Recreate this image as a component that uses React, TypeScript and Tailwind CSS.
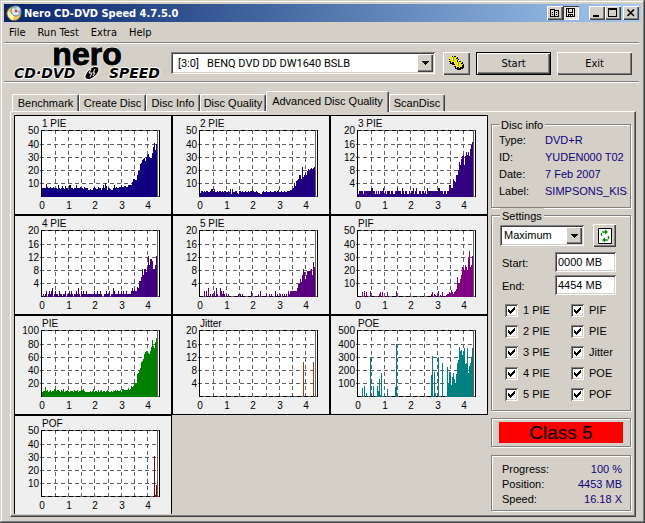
import type { ReactNode } from "react";

const raised =
  "bg-[#d4d0c8] shadow-[inset_1px_1px_#fff,inset_-1px_-1px_#404040,inset_-2px_-2px_#808080]";
const sunken =
  "bg-white shadow-[inset_1px_1px_#808080,inset_-1px_-1px_#fff,inset_2px_2px_#404040,inset_-2px_-2px_#d4d0c8]";
const etched =
  "border border-[#808080] shadow-[1px_1px_#fff,inset_1px_1px_#fff]";

// Column heights of each graph, one per pixel column, on a plot 66 units high.
const list = (s: string) => s.split(" ").map(Number);
const sparse = (points: Record<number, number>, tailStart = 116, tail = "") => {
  const out: number[] = new Array(116).fill(0);
  Object.entries(points).forEach(([k, v]) => (out[Number(k)] = v));
  if (tail) list(tail).forEach((v, i) => (out[tailStart + i] = v));
  return out.slice(0, 116);
};

type Chart = { title: string; color: string; labels: string[]; data: number[]; last?: boolean };

const L50 = ["10", "20", "30", "40", "50"];
const L20 = ["4", "8", "12", "16", "20"];
const L100 = ["20", "40", "60", "80", "100"];
const L500 = ["100", "200", "300", "400", "500"];

const charts: Chart[] = [
  {
    title: "1 PIE",
    color: "#100080",
    labels: L50,
    data: list(
      "9 9 9 9 13 10 9 9 10 9 9 10 9 9 9 8 12 9 8 9 11 9 8 11 9 9 7 12 12 9 9 8 9 9 12 9 9 9 10 9 9 8 10 9 9 9 7 7 8 7 7 9 10 9 8 8 10 9 9 7 9 12 9 14 11 7 9 9 8 7 7 9 12 9 10 9 9 10 10 12 10 10 11 11 10 10 12 12 12 12 15 18 18 17 17 22 26 26 33 34 37 38 39 36 40 42 43 40 39 39 44 50 54 47 53 50",
    ),
  },
  {
    title: "2 PIE",
    color: "#200080",
    labels: L50,
    data: list(
      "4 6 6 5 6 5 6 6 5 5 6 8 8 6 8 5 5 6 5 6 6 5 6 5 6 6 5 5 6 5 8 3 8 5 5 6 6 4 3 6 6 5 6 5 5 6 5 5 6 5 6 6 7 6 5 5 6 5 4 4 3 3 5 6 5 5 6 5 5 5 6 5 5 5 6 6 5 6 7 5 5 6 5 5 6 5 5 6 6 6 7 7 8 9 14 11 16 17 18 22 22 18 30 20 22 24 22 26 28 27 28 29 28 29 30 29",
    ),
  },
  {
    title: "3 PIE",
    color: "#300080",
    labels: L20,
    data: list(
      "3 6 6 6 6 3 6 6 6 6 6 6 6 9 9 6 6 3 6 3 6 3 6 6 6 9 3 6 3 6 6 6 3 6 6 3 3 6 6 9 6 6 6 3 9 6 3 6 6 3 3 6 3 6 6 9 3 6 9 3 3 6 6 3 6 6 3 6 3 9 6 6 6 6 6 6 6 6 6 6 9 9 6 6 6 3 6 6 3 6 6 12 12 9 9 18 16 15 22 22 27 35 32 38 41 42 32 41 45 42 45 41 48 52 55 61",
    ),
  },
  {
    title: "4 PIE",
    color: "#400080",
    labels: L20,
    data: list(
      "0 3 0 3 6 0 3 6 3 6 9 0 3 6 3 3 0 6 3 3 0 3 3 6 0 3 3 6 3 6 3 0 3 3 6 3 9 3 0 6 3 6 3 3 6 3 3 3 3 3 3 3 6 3 3 6 3 3 6 3 0 0 3 3 6 3 3 6 0 3 3 9 6 3 3 3 6 3 3 6 3 6 3 3 6 3 3 3 3 6 9 6 8 6 6 10 9 16 16 20 28 22 28 28 25 30 41 32 38 38 36 28 28 32 41 35",
    ),
  },
  {
    title: "5 PIE",
    color: "#580080",
    labels: L20,
    data: sparse(
      { 4: 6, 6: 6, 8: 9, 10: 3, 12: 3, 14: 6, 16: 9, 17: 3, 20: 9, 21: 6, 22: 3, 23: 6, 24: 3, 26: 3, 28: 3, 38: 3, 40: 3, 42: 3, 51: 6, 58: 3, 60: 6, 66: 3, 69: 3, 71: 3, 75: 6, 77: 3, 80: 3, 82: 3, 84: 3, 86: 3, 88: 6 },
      89,
      "3 6 6 6 6 6 6 6 9 13 13 18 15 22 28 25 18 22 26 26 26 26 28 22 35 30 35",
    ),
  },
  {
    title: "PIF",
    color: "#800080",
    labels: L50,
    data: sparse(
      { 4: 5, 6: 6, 8: 5, 12: 6, 18: 1, 21: 3, 22: 5, 24: 5, 28: 1, 29: 5, 38: 6, 50: 1, 63: 1, 73: 3, 74: 5, 76: 3, 77: 2, 80: 6, 82: 2, 84: 5 },
      87,
      "1 2 3 3 5 3 7 5 3 5 6 8 20 14 14 18 22 30 29 27 32 30 27 39 46 30 32 41 43",
    ),
  },
  {
    title: "PIE",
    color: "#008000",
    labels: L100,
    data: list(
      "5 6 6 10 6 7 5 6 7 5 6 6 8 8 6 7 7 6 5 7 6 8 5 6 6 7 6 5 6 6 6 5 7 6 6 7 5 6 6 7 7 8 6 5 5 5 5 5 6 5 6 8 5 6 6 5 7 5 6 7 5 6 6 5 6 7 6 5 5 6 5 6 6 7 6 7 6 6 7 5 8 8 7 7 7 7 9 7 8 11 10 11 14 14 14 23 24 26 29 35 36 38 43 45 46 45 44 43 46 50 57 51 49 55 59 57",
    ),
  },
  { title: "Jitter", color: "#a04000", labels: L20, data: sparse({ 103: 35, 113: 35 }) },
  {
    title: "POE",
    color: "#008080",
    labels: L500,
    data: sparse(
      { 4: 9, 6: 11, 8: 4, 12: 39, 15: 11, 19: 11, 20: 6, 21: 18, 22: 2, 23: 24, 28: 1, 29: 8, 37: 10, 38: 53, 73: 22, 74: 41, 76: 25, 77: 4, 80: 40, 84: 34 },
      89,
      "30 13 25 24 12 20 24 18 14 23 34 37 50 46 47 42 46 49 33 34 49 24 31 34 39 49 49",
    ),
  },
  {
    title: "POF",
    color: "#800000",
    labels: L50,
    last: true,
    data: sparse({ 112: 41, 113: 2, 114: 12, 115: 14 }),
  },
];

const xs = [26, 40, 53, 66, 79, 93, 106, 119, 132];
const ys = [80, 67, 54, 41, 28, 14];

function Graph({ title, color, labels, data, last }: Chart) {
  return (
    <div className={last ? "border-x border-t border-black bg-[#efefef]" : "border border-black bg-[#efefef]"}>
      <svg viewBox="0 0 156 98" className="block w-full font-['Liberation_Sans',Arial,sans-serif] text-[10px]" shapeRendering="crispEdges" role="img" aria-label={title}>
        <rect x="26" y="14" width="119" height="67" fill="#fff" />
        {xs.slice(1).map((x) => (
          <line key={x} x1={x + 0.5} x2={x + 0.5} y1="14" y2="83" stroke="#606060" strokeDasharray="4 3" />
        ))}
        {ys.slice(1, 5).map((y) => (
          <line key={y} x1="25" x2="144" y1={y + 0.5} y2={y + 0.5} stroke="#606060" strokeDasharray="4 3" />
        ))}
        <path d="M26 14.5H144M26 80.5H144" stroke="#606060" />
        <path d="M26 14.5H144M26 80.5H144" stroke="#000" strokeDasharray="4 3" />
        {data.map((h, k) => (h ? <rect key={k} x={27 + k} y={81 - h} width="1" height={h} fill={color} /> : null))}
        <path d="M26.5 14V81M144.5 14V81" stroke="#000" />
        <path d="M142.5 14V81" stroke="#606060" />
        <text x="27" y="11">{title}</text>
        {labels.map((l, i) => (
          <text key={l} x="24" y={ys[i + 1] + 4} textAnchor="end">{l}</text>
        ))}
        {[0, 1, 2, 3, 4].map((n) => (
          <text key={n} x={xs[n * 2] + 1} y="93" textAnchor="middle">{n}</text>
        ))}
      </svg>
    </div>
  );
}

function Arrow() {
  return (
    <span className={`pointer-events-none absolute inset-y-0.5 right-0.5 flex w-4 items-center justify-center ${raised}`}>
      <svg width="7" height="4" viewBox="0 0 7 4" shapeRendering="crispEdges"><path d="M0 0h7v1H6v1H5v1H4v1H3V3H2V2H1V1H0z" /></svg>
    </span>
  );
}

function TitleButton({ label, pressed, children }: { label: string; pressed?: boolean; children: ReactNode }) {
  return (
    <button
      type="button"
      aria-label={label}
      className={
        pressed
          ? "flex h-3.5 w-4 items-center justify-center bg-[#e8e5df] shadow-[inset_1px_1px_#404040,inset_-1px_-1px_#fff]"
          : `flex h-3.5 w-4 items-center justify-center ${raised}`
      }
    >
      {children}
    </button>
  );
}

function Check({ label }: { label: string }) {
  return (
    <label className="flex h-[21px] items-center gap-[5px]">
      <span className="relative flex">
        <input type="checkbox" defaultChecked className={`peer size-[13px] appearance-none ${sunken}`} />
        <svg className="pointer-events-none absolute inset-0 hidden peer-checked:block" width="13" height="13" viewBox="0 0 13 13" shapeRendering="crispEdges">
          <path d="M3 5h1v1h1v1h1V6h1V5h1V4h1V3h1v3H9v1H8v1H7v1H6v1H5V9H4V8H3z" />
        </svg>
      </span>
      {label}
    </label>
  );
}

function Field({ label, value }: { label: string; value: string }) {
  return (
    <label className="flex h-[23px] items-center justify-between">
      <span className="pl-0.5 pt-1">{label}</span>
      <input type="text" defaultValue={value} className={`h-5 w-[61px] px-[3px] ${sunken}`} />
    </label>
  );
}

function Logo() {
  const glow = "[text-shadow:1px_0_#fff,-1px_0_#fff,0_1px_#fff,0_-1px_#fff]";
  return (
    <div className="flex w-[146px] flex-col" role="img" aria-label="nero CD-DVD Speed">
      <div className={`text-center text-[32px] leading-[18px] font-bold [-webkit-text-stroke:1px_#000] ${glow}`}>nero</div>
      <div className={`flex items-center justify-between pt-0.5 font-['DejaVu_Sans',sans-serif] text-[14px] leading-4 font-bold italic ${glow}`}>
        <span>CD·DVD</span>
        <svg width="18" height="14" viewBox="0 0 18 14">
          <ellipse cx="9" cy="7" rx="8.500" ry="4.500" transform="rotate(-42 9 7)" stroke="#fff" />
          <path d="m8 3-2 4h3l-2 4M12 3l-2 4h2l-2 3" fill="none" stroke="#fff" />
        </svg>
        <span>SPEED</span>
      </div>
    </div>
  );
}

const tabs = [
  ["Benchmark", "w-[67px]"],
  ["Create Disc", "w-[67px]"],
  ["Disc Info", "w-[54px]"],
  ["Disc Quality", "w-[66px]"],
  ["Advanced Disc Quality", "w-[123px]"],
  ["ScanDisc", "w-[56px]"],
];
const info = [
  ["Type:", "DVD+R"],
  ["ID:", "YUDEN000 T02"],
  ["Date:", "7 Feb 2007"],
  ["Label:", "SIMPSONS_KISS"],
];

export default function App() {
  return (
    <div className="min-h-screen bg-[#d4d0c8] pt-1 pr-1 pb-[5px] pl-1 font-['Liberation_Sans',Arial,sans-serif] text-[11px] leading-[13px] text-black shadow-[inset_-1px_-1px_#404040,inset_1px_1px_#d4d0c8,inset_-2px_-2px_#808080,inset_2px_2px_#fff]">
      <header className="flex h-[18px] items-center bg-linear-to-r from-[#0a246a] to-[#a6caf0] pr-0.5 pl-0.5">
        <svg width="16" height="16" viewBox="0 0 16 16">
          <circle cx="8" cy="8.500" r="7" fill="#e5cf5a" stroke="#8c7a20" />
          <path d="M2 6a7 7 0 0 0 5 9l1-5z" fill="#fff7b8" />
          <circle cx="10" cy="6" r="5" fill="#d7e6f2" stroke="#6f8296" />
          <path d="M10 6 7 2l4-.5zM10 6l4 3 .5-4z" fill="#7fb3e0" />
          <circle cx="10" cy="6" r="1.800" fill="#d33" stroke="#fff" strokeWidth=".6" />
        </svg>
        <h1 className="ml-0.5 flex-1 font-['DejaVu_Sans_Condensed','DejaVu_Sans',sans-serif] text-[11px] font-bold text-white">Nero CD-DVD Speed 4.7.5.0</h1>
        <div className="flex">
          <TitleButton label="Copy">
            <svg width="10" height="10" viewBox="0 0 10 10" shapeRendering="crispEdges" fill="none" stroke="#000"><path d="M.5 1.500h4v7h-4zM4.500 2.500h4v6h-4M2 4.500h1M2 6.500h1M6 4.500h1M6 6.500h1" /></svg>
          </TitleButton>
          <TitleButton label="Save" pressed>
            <svg width="10" height="10" viewBox="0 0 10 10" shapeRendering="crispEdges" fill="none" stroke="#000"><path d="M.5.5h8v8h-8zM2.500 1v3h4V1M2.500 9V6.500h4V9M4.500 7v1" /></svg>
          </TitleButton>
          <div className="w-2.5" />
          <TitleButton label="Minimize">
            <svg width="10" height="10" viewBox="0 0 10 10" shapeRendering="crispEdges"><path d="M1 7h6v2H1z" /></svg>
          </TitleButton>
          <TitleButton label="Maximize">
            <svg width="10" height="10" viewBox="0 0 10 10" shapeRendering="crispEdges"><path d="M0 0h9v9H0zM1 2v6h7V2z" fillRule="evenodd" /></svg>
          </TitleButton>
          <div className="w-0.5" />
          <TitleButton label="Close">
            <svg width="10" height="10" viewBox="0 0 10 10"><path d="M1.500 1.500 8 8M8 1.500 1.500 8" stroke="#000" strokeWidth="1.600" /></svg>
          </TitleButton>
        </div>
      </header>

      <nav className="mr-0.5 flex h-[22px] items-center gap-3 border-b border-white pl-[5px] font-['DejaVu_Sans_Condensed','DejaVu_Sans',sans-serif] text-[11px] shadow-[inset_0_-1px_#808080]">
        {["File", "Run Test", "Extra", "Help"].map((m) => (
          <button key={m} type="button">{m}</button>
        ))}
      </nav>

      <div className="mr-0.5 flex h-[39px] items-center border-b border-white pr-[7px] pl-[10px] shadow-[inset_0_-1px_#808080]">
        <Logo />
        <div className="relative ml-[11px] flex flex-1">
          <select aria-label="Drive" className={`h-[22px] w-full appearance-none pl-[7px] font-[Roboto,sans-serif] text-[11px] ${sunken}`}>
            <option>[3:0]&nbsp;&nbsp; BENQ DVD DD DW1640 BSLB</option>
          </select>
          <Arrow />
        </div>
        <button type="button" aria-label="Drive options" className={`ml-2 flex h-[23px] w-[27px] items-center justify-center ${raised}`}>
          <svg width="17" height="16" viewBox="0 0 17 16" shapeRendering="crispEdges">
            <path d="M4 1h4v1h2v2h1v4h-1v1H8v1H4V9H2V7H1V3h1V2h2z" />
            <path d="M9 6h4v1h2v2h1v4h-1v1h-2v1H9v-1H7v-2H6V8h1V7h2z" />
            <path d="M1 2h2V1h1v1h1V0h1v2h2V1h1v2H8v1h2v1H9v2H7v1H6V7H4v1H3V6H1V5h1V4H1z" fill="#f4ea00" />
            <path d="M6 7h2V6h1v1h1V5h1v2h2V6h1v2h-1v1h2v1h-1v2h-2v1h-1v-1H9v1H8v-2H6v-1h1V9H6z" fill="#f4ea00" />
            <path d="M5 2h1v4H5zM10 7h1v4h-1z" fill="#808080" />
            <path d="M4 3h1v2H4zM9 8h1v2H9z" fill="#fff" />
          </svg>
        </button>
        <button type="button" className={`ml-1.5 h-[23px] w-[75px] border border-black font-['DejaVu_Sans_Condensed','DejaVu_Sans',sans-serif] ${raised}`}>Start</button>
        <button type="button" className={`ml-1.5 h-[23px] w-[75px] font-['DejaVu_Sans_Condensed','DejaVu_Sans',sans-serif] ${raised}`}>Exit</button>
      </div>

      <div className="mt-2 mr-[5px] ml-1.5">
        <div role="tablist" className="flex h-5 items-end pl-0.5">
          {tabs.map(([t, w]) => (
            <button
              key={t}
              type="button"
              role="tab"
              aria-selected={t === "Advanced Disc Quality"}
              className={`${w} rounded-t-[2px] border-t border-r border-l border-t-white border-r-[#404040] border-l-white bg-[#d4d0c8] whitespace-nowrap shadow-[inset_-1px_0_#808080] ${
                t === "Advanced Disc Quality" ? "z-10 -mb-px h-[21px] pb-0.5" : "h-[17px]"
              }`}
            >
              {t}
            </button>
          ))}
        </div>

        <main className="flex items-start border-t border-r border-b border-l border-t-white border-r-[#404040] border-b-[#404040] border-l-white pt-[3px] pr-1 pb-0.5 pl-[3px] shadow-[inset_-1px_-1px_#808080]">
          <section className="grid flex-1 grid-cols-3">
            {charts.map((c) => (
              <Graph key={c.title} {...c} />
            ))}
          </section>

          <aside className="ml-[3px] flex w-[140px] flex-col pt-0.5">
            <fieldset className={`h-[91px] pr-0.5 pl-[7px] ${etched}`}>
              <legend className="bg-[#d4d0c8] px-0.5 pt-0.5">Disc info</legend>
              <dl className="grid grid-cols-[46px_minmax(0,1fr)] leading-[17px]">
                {info.map(([k, v]) => (
                  <div key={k} className="contents">
                    <dt>{k}</dt>
                    <dd className="overflow-hidden whitespace-nowrap text-[#10007c]">{v}</dd>
                  </div>
                ))}
              </dl>
            </fieldset>

            <fieldset className={`h-[203px] px-2 ${etched}`}>
              <legend className="bg-[#d4d0c8] px-0.5 pt-0.5">Settings</legend>
              <div className="flex items-center justify-between pt-px pr-1.5">
                <div className="relative flex">
                  <select aria-label="Speed" className={`h-[21px] w-[84px] appearance-none pl-1 ${sunken}`}>
                    <option>Maximum</option>
                  </select>
                  <Arrow />
                </div>
                <button type="button" aria-label="Refresh" className={`flex h-[23px] w-[23px] items-center justify-center ${raised}`}>
                  <svg width="14" height="16" viewBox="0 0 14 16">
                    <path d="M.5.5h13v15H.5z" fill="#fff" stroke="#000" />
                    <path d="M3.500 8V5.500Q3.500 4 5 4h3M10.500 8v2.500Q10.500 12 9 12H6" fill="none" stroke="#080" strokeWidth="1.300" strokeDasharray="3 1" />
                    <path d="m7 1.500 3 2.500-3 2.500zM7 9.500 4 12l3 2.500z" fill="#080" />
                  </svg>
                </button>
              </div>
              <div className="pt-[3px] pr-1.5">
                <Field label="Start:" value="0000 MB" />
                <Field label="End:" value="4454 MB" />
              </div>
              <div className="grid grid-cols-[66px_1fr] pt-1 pl-[5px]">
                {["1 PIE", "PIF", "2 PIE", "PIE", "3 PIE", "Jitter", "4 PIE", "POE", "5 PIE", "POF"].map((c) => (
                  <Check key={c} label={c} />
                ))}
              </div>
            </fieldset>

            <div className={`mt-[7px] px-[7px] py-[3px] ${etched}`}>
              <div className="bg-[#f00] text-center text-[19px] leading-[21px]">Class 5</div>
            </div>

            <dl className={`mt-2 grid h-14 grid-cols-2 content-start pt-1.5 pr-2 pl-2.5 leading-[15px] ${etched}`}>
              <dt>Progress:</dt>
              <dd className="text-right text-[#10007c]">100 %</dd>
              <dt>Position:</dt>
              <dd className="text-right text-[#10007c]">4453 MB</dd>
              <dt>Speed:</dt>
              <dd className="text-right text-[#10007c]">16.18 X</dd>
            </dl>
          </aside>
        </main>
      </div>
    </div>
  );
}
